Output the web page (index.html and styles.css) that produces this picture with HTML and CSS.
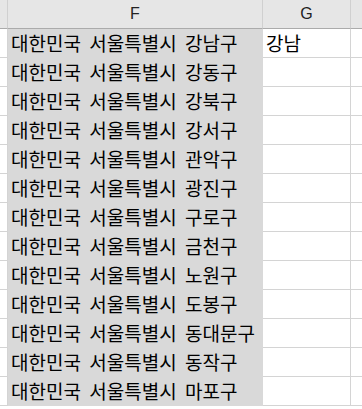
FILE: index.html
```html
<!DOCTYPE html>
<html lang="ko">
<head>
    <meta charset="UTF-8">
    <title>시트</title>
    <link rel="stylesheet" href="styles.css">
</head>
<body>
    <div class="sheet">
        <div class="row head">
            <div class="cell edge"></div>
            <div class="cell col-f">F</div>
            <div class="cell col-g">G</div>
            <div class="cell rest"></div>
        </div>
        <div class="row"><div class="cell edge"></div><div class="cell col-f sel">대한민국 서울특별시 강남구</div><div class="cell col-g">강남</div><div class="cell rest"></div></div>
        <div class="row"><div class="cell edge"></div><div class="cell col-f sel">대한민국 서울특별시 강동구</div><div class="cell col-g"></div><div class="cell rest"></div></div>
        <div class="row"><div class="cell edge"></div><div class="cell col-f sel">대한민국 서울특별시 강북구</div><div class="cell col-g"></div><div class="cell rest"></div></div>
        <div class="row"><div class="cell edge"></div><div class="cell col-f sel">대한민국 서울특별시 강서구</div><div class="cell col-g"></div><div class="cell rest"></div></div>
        <div class="row"><div class="cell edge"></div><div class="cell col-f sel">대한민국 서울특별시 관악구</div><div class="cell col-g"></div><div class="cell rest"></div></div>
        <div class="row"><div class="cell edge"></div><div class="cell col-f sel">대한민국 서울특별시 광진구</div><div class="cell col-g"></div><div class="cell rest"></div></div>
        <div class="row"><div class="cell edge"></div><div class="cell col-f sel">대한민국 서울특별시 구로구</div><div class="cell col-g"></div><div class="cell rest"></div></div>
        <div class="row"><div class="cell edge"></div><div class="cell col-f sel">대한민국 서울특별시 금천구</div><div class="cell col-g"></div><div class="cell rest"></div></div>
        <div class="row"><div class="cell edge"></div><div class="cell col-f sel">대한민국 서울특별시 노원구</div><div class="cell col-g"></div><div class="cell rest"></div></div>
        <div class="row"><div class="cell edge"></div><div class="cell col-f sel">대한민국 서울특별시 도봉구</div><div class="cell col-g"></div><div class="cell rest"></div></div>
        <div class="row"><div class="cell edge"></div><div class="cell col-f sel">대한민국 서울특별시 동대문구</div><div class="cell col-g"></div><div class="cell rest"></div></div>
        <div class="row"><div class="cell edge"></div><div class="cell col-f sel">대한민국 서울특별시 동작구</div><div class="cell col-g"></div><div class="cell rest"></div></div>
        <div class="row"><div class="cell edge"></div><div class="cell col-f sel">대한민국 서울특별시 마포구</div><div class="cell col-g"></div><div class="cell rest"></div></div>
    </div>
</body>
</html>
```

FILE: styles.css
```css
body {
    margin: 0;
    background: #fff;
    font-family: "Noto Sans CJK KR", "Noto Sans", sans-serif;
    color: #000;
}
.sheet {
    width: 362px;
    height: 409px;
    overflow: hidden;
}
.row {
    display: grid;
    grid-template-columns: 8px 255px 88px 1fr;
    height: 29px;
}
.cell {
    box-sizing: border-box;
    border-bottom: 1px solid #d4d4d4;
    white-space: nowrap;
    overflow: hidden;
}
.edge {
    border-right: 1px solid #d4d4d4;
}
.col-f, .col-g {
    font-size: 19px;
    line-height: 28px;
    padding-left: 3px;
}
.col-g {
    border-right: 1px solid #d4d4d4;
}
.sel {
    background: #d9d9d9;
    border-bottom-color: #d9d9d9;
    word-spacing: 3px;
}
.head .cell {
    background: #e6e6e6;
    border-bottom: 1px solid #ababab;
    border-right: 1px solid #d0d0d0;
}
.head .col-f, .head .col-g {
    padding-left: 0;
    text-align: center;
    font-family: "Liberation Sans", Arial, sans-serif;
    font-size: 16px;
    color: #222;
}
.head .rest {
    border-right: none;
}
```
